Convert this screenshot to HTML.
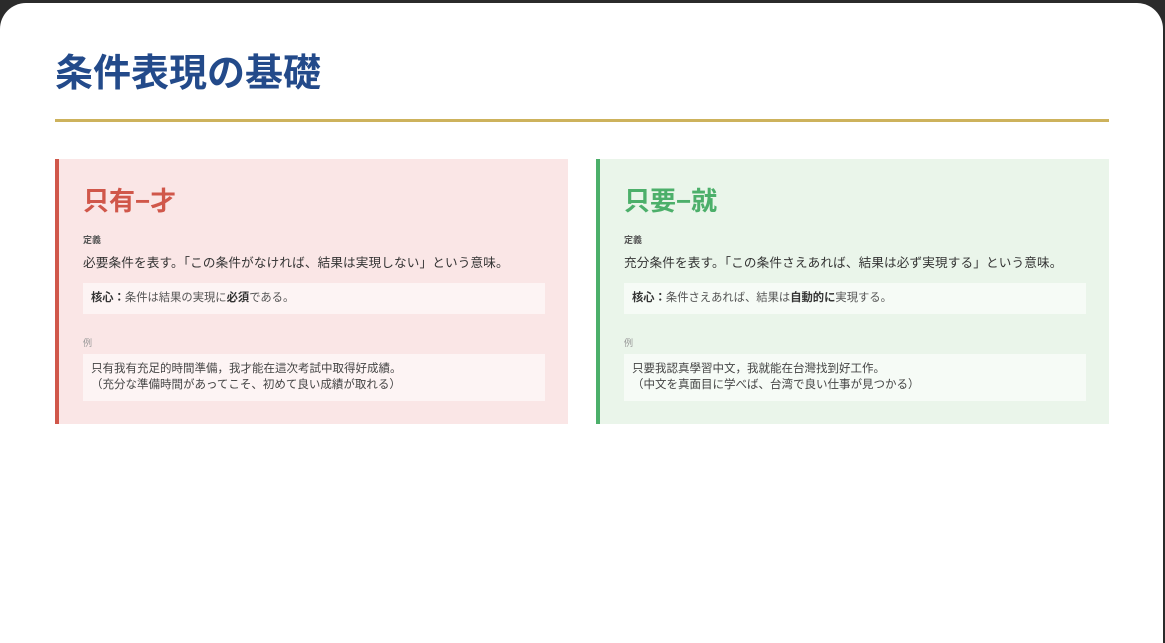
<!DOCTYPE html>
<html><head><meta charset="utf-8"><style>
*{margin:0;padding:0;box-sizing:border-box}
html,body{width:1165px;height:631px;background:#2b2b2b;overflow:hidden;font-family:"Liberation Sans","Noto Sans CJK JP",sans-serif}
.panel{position:absolute;left:0;top:3px;width:1163px;height:640px;background:#fff;border-radius:26px 26px 0 0}
h1{position:absolute;left:55px;top:51px;font-size:38px;font-weight:700;color:#234a8a;line-height:46px}
.rule{position:absolute;left:55px;top:119px;width:1054px;height:3px;background:#cdb25c}
.card{position:absolute;top:159px;width:513px;height:265px}
.c1{left:55px;background:#fae6e6;border-left:4px solid #d0574a}
.c2{left:596px;background:#eaf5ea;border-left:4px solid #4caf6a}
.t{position:absolute;left:24px;top:25px;font-size:26px;font-weight:700;line-height:34px}
.c1 .t{color:#d0574a}.c2 .t{color:#4caf6a}
.lab{position:absolute;left:24px;top:74px;font-size:9px;font-weight:700;color:#555}
.def{position:absolute;left:24px;top:96px;font-size:12.6px;color:#333;line-height:17px;white-space:nowrap;letter-spacing:0.15px}
.core{position:absolute;left:24px;top:124px;width:462px;height:31px;background:rgba(255,255,255,.55);font-size:11.3px;color:#555;padding:8px 8px;line-height:15px}
.core b{color:#333}
.lab2{position:absolute;left:24px;top:177px;font-size:9px;color:#999}
.ex{position:absolute;left:24px;top:195px;width:462px;height:47px;background:rgba(255,255,255,.55);font-size:11.5px;color:#444;padding:7px 8px;line-height:16px}
</style></head><body>
<div class="panel"></div>
<h1>条件表現の基礎</h1>
<div class="rule"></div>
<div class="card c1">
<div class="t">只有−才</div>
<div class="lab">定義</div>
<div class="def">必要条件を表す。「この条件がなければ、結果は実現しない」という意味。</div>
<div class="core"><b>核心：</b>条件は結果の実現に<b>必須</b>である。</div>
<div class="lab2">例</div>
<div class="ex">只有我有充足的時間準備，我才能在這次考試中取得好成績。<br>（充分な準備時間があってこそ、初めて良い成績が取れる）</div>
</div>
<div class="card c2">
<div class="t">只要−就</div>
<div class="lab">定義</div>
<div class="def">充分条件を表す。「この条件さえあれば、結果は必ず実現する」という意味。</div>
<div class="core"><b>核心：</b>条件さえあれば、結果は<b>自動的に</b>実現する。</div>
<div class="lab2">例</div>
<div class="ex">只要我認真學習中文，我就能在台灣找到好工作。<br>（中文を真面目に学べば、台湾で良い仕事が見つかる）</div>
</div>
</body></html>
